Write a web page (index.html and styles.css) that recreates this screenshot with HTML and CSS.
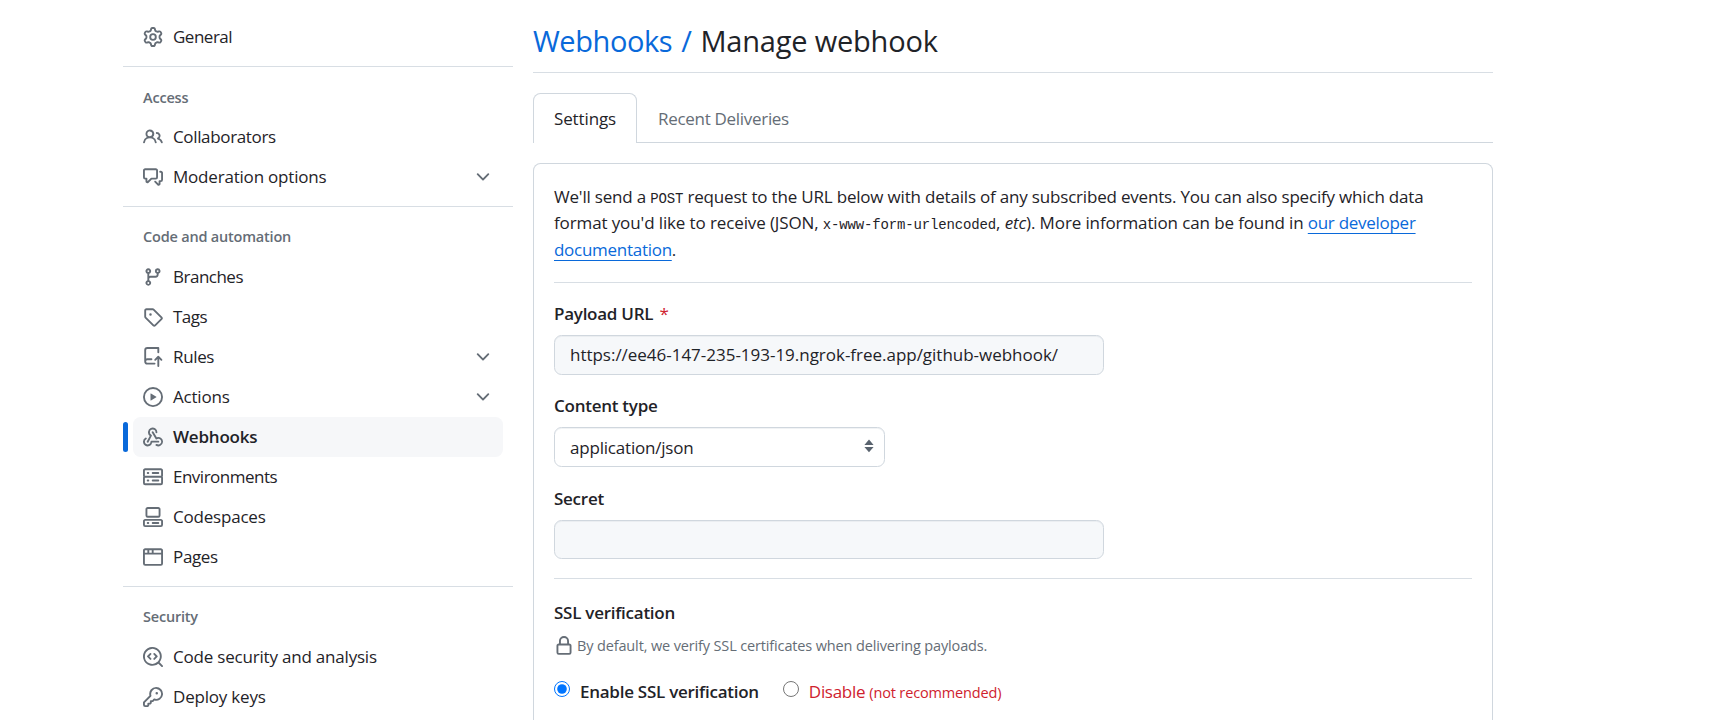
FILE: index.html
```
<!DOCTYPE html>
<html lang="en">
<head>
<meta charset="utf-8">
<title>Manage webhook</title>
<link rel="stylesheet" href="styles.css">
</head>
<body>
<svg class="defs" aria-hidden="true"><symbol id="chevron" viewBox="0 0 16 16"><path d="M12.78 5.22a.749.749 0 0 1 0 1.06l-4.25 4.25a.749.749 0 0 1-1.06 0L3.22 6.28a.749.749 0 1 1 1.06-1.06L8 8.939l3.72-3.719a.749.749 0 0 1 1.06 0Z"/></symbol></svg>
<div class="layout">
  <nav class="sidebar">
    <ul class="group">
      <li class="item"><svg class="icon" viewBox="0 0 16 16"><path d="M8 0a8.2 8.2 0 0 1 .701.031C9.444.095 9.99.645 10.16 1.29l.288 1.107c.018.066.079.158.212.224.231.114.454.243.668.386.123.082.233.09.299.071l1.103-.303c.644-.176 1.392.021 1.82.63.27.385.506.792.704 1.218.315.675.111 1.422-.364 1.891l-.814.806c-.049.048-.098.147-.088.294.016.257.016.515 0 .772-.01.147.038.246.088.294l.814.806c.475.469.679 1.216.364 1.891a7.977 7.977 0 0 1-.704 1.217c-.428.61-1.176.807-1.82.63l-1.102-.302c-.067-.019-.177-.011-.3.071a5.909 5.909 0 0 1-.668.386c-.133.066-.194.158-.211.224l-.29 1.106c-.168.646-.715 1.196-1.458 1.26a8.006 8.006 0 0 1-1.402 0c-.743-.064-1.289-.614-1.458-1.26l-.289-1.106c-.018-.066-.079-.158-.212-.224a5.738 5.738 0 0 1-.668-.386c-.123-.082-.233-.09-.299-.071l-1.103.303c-.644.176-1.392-.021-1.82-.63a8.12 8.12 0 0 1-.704-1.218c-.315-.675-.111-1.422.363-1.891l.815-.806c.05-.048.098-.147.088-.294a6.214 6.214 0 0 1 0-.772c.01-.147-.038-.246-.088-.294l-.815-.806C.635 6.045.431 5.298.746 4.623a7.92 7.92 0 0 1 .704-1.217c.428-.61 1.176-.807 1.82-.63l1.102.302c.067.019.177.011.3-.071.214-.143.437-.272.668-.386.133-.066.194-.158.211-.224l.29-1.106C6.009.645 6.556.095 7.299.03 7.53.01 7.764 0 8 0Zm-.571 1.525c-.036.003-.108.036-.137.146l-.289 1.105c-.147.561-.549.967-.998 1.189-.173.086-.34.183-.5.29-.417.278-.97.423-1.529.27l-1.103-.303c-.109-.03-.175.016-.195.045-.22.312-.412.644-.573.99-.014.031-.021.11.059.19l.815.806c.411.406.562.957.53 1.456a4.709 4.709 0 0 0 0 .582c.032.499-.119 1.05-.53 1.456l-.815.806c-.081.08-.073.159-.059.19.162.346.353.677.573.989.02.03.085.076.195.046l1.102-.303c.56-.153 1.113-.008 1.53.27.161.107.328.204.501.29.447.222.85.629.997 1.189l.289 1.105c.029.109.101.143.137.146a6.6 6.6 0 0 0 1.142 0c.036-.003.108-.036.137-.146l.289-1.105c.147-.561.549-.967.998-1.189.173-.086.34-.183.5-.29.417-.278.97-.423 1.529-.27l1.103.303c.109.029.175-.016.195-.045.22-.313.411-.644.573-.99.014-.031.021-.11-.059-.19l-.815-.806c-.411-.406-.562-.957-.53-1.456a4.709 4.709 0 0 0 0-.582c-.032-.499.119-1.05.53-1.456l.815-.806c.081-.08.073-.159.059-.19a6.464 6.464 0 0 0-.573-.989c-.02-.03-.085-.076-.195-.046l-1.102.303c-.56.153-1.113.008-1.53-.27a4.44 4.44 0 0 0-.501-.29c-.447-.222-.85-.629-.997-1.189l-.289-1.105c-.029-.11-.101-.143-.137-.146a6.6 6.6 0 0 0-1.142 0ZM11 8a3 3 0 1 1-6 0 3 3 0 0 1 6 0ZM9.5 8a1.5 1.5 0 1 0-3.001.001A1.5 1.5 0 0 0 9.5 8Z"/></svg><span class="label tighter lower">General</span></li>
    </ul>
    <div class="divider"></div>
    <h3 class="group-title lower">Access</h3>
    <ul class="group">
      <li class="item"><svg class="icon" viewBox="0 0 16 16"><path d="M2 5.5a3.5 3.5 0 1 1 5.898 2.549 5.508 5.508 0 0 1 3.034 4.084.75.75 0 1 1-1.482.235 4 4 0 0 0-7.9 0 .75.75 0 0 1-1.482-.236A5.507 5.507 0 0 1 3.102 8.05 3.493 3.493 0 0 1 2 5.5ZM11 4a3.001 3.001 0 0 1 2.22 5.018 5.01 5.01 0 0 1 2.56 3.012.749.749 0 0 1-.885.954.752.752 0 0 1-.549-.514 3.507 3.507 0 0 0-2.522-2.372.75.75 0 0 1-.574-.73v-.352a.75.75 0 0 1 .416-.672A1.5 1.5 0 0 0 11 5.5.75.75 0 0 1 11 4Zm-5.5-.5a2 2 0 1 0-.001 3.999A2 2 0 0 0 5.5 3.5Z"/></svg><span class="label tight">Collaborators</span></li>
      <li class="item"><svg class="icon" viewBox="0 0 16 16"><path d="M1.75 1h8.5c.966 0 1.75.784 1.75 1.75v5.5A1.75 1.75 0 0 1 10.25 10H7.061l-2.574 2.573A1.458 1.458 0 0 1 2 11.543V10h-.25A1.75 1.75 0 0 1 0 8.25v-5.5C0 1.784.784 1 1.75 1ZM1.5 2.75v5.5c0 .138.112.25.25.25h1a.75.75 0 0 1 .75.75v2.19l2.72-2.72a.749.749 0 0 1 .53-.22h3.5a.25.25 0 0 0 .25-.25v-5.5a.25.25 0 0 0-.25-.25h-8.5a.25.25 0 0 0-.25.25Zm13 2a.25.25 0 0 0-.25-.25h-.5a.75.75 0 0 1 0-1.5h.5c.966 0 1.75.784 1.75 1.75v5.5A1.75 1.75 0 0 1 14.25 12H14v1.543a1.458 1.458 0 0 1-2.487 1.03L9.22 12.28a.749.749 0 0 1 .326-1.275.749.749 0 0 1 .734.215l2.22 2.22v-2.19a.75.75 0 0 1 .75-.75h1a.25.25 0 0 0 .25-.25Z"/></svg><span class="label">Moderation options</span><svg class="icon"><use href="#chevron"/></svg></li>
    </ul>
    <div class="divider"></div>
    <h3 class="group-title">Code and automation</h3>
    <ul class="group">
      <li class="item"><svg class="icon" viewBox="0 0 16 16"><path d="M9.5 3.25a2.25 2.25 0 1 1 3 2.122V6A2.5 2.5 0 0 1 10 8.5H6a1 1 0 0 0-1 1v1.128a2.251 2.251 0 1 1-1.5 0V5.372a2.25 2.25 0 1 1 1.5 0v1.836A2.493 2.493 0 0 1 6 7h4a1 1 0 0 0 1-1v-.628A2.25 2.25 0 0 1 9.5 3.25Zm-6 0a.75.75 0 1 0 1.5 0 .75.75 0 0 0-1.5 0Zm8.25-.75a.75.75 0 1 0 0 1.5.75.75 0 0 0 0-1.5ZM4.25 12a.75.75 0 1 0 0 1.5.75.75 0 0 0 0-1.5Z"/></svg><span class="label tighter">Branches</span></li>
      <li class="item"><svg class="icon" viewBox="0 0 16 16"><path d="M1 7.775V2.75C1 1.784 1.784 1 2.75 1h5.025c.464 0 .91.184 1.238.513l6.25 6.25a1.75 1.75 0 0 1 0 2.474l-5.026 5.026a1.75 1.75 0 0 1-2.474 0l-6.25-6.25A1.752 1.752 0 0 1 1 7.775Zm1.5 0c0 .066.026.13.073.177l6.25 6.25a.25.25 0 0 0 .354 0l5.025-5.025a.25.25 0 0 0 0-.354l-6.25-6.25a.25.25 0 0 0-.177-.073H2.75a.25.25 0 0 0-.25.25ZM6 5a1 1 0 1 1 0 2 1 1 0 0 1 0-2Z"/></svg><span class="label tighter">Tags</span></li>
      <li class="item"><svg class="icon" viewBox="0 0 16 16"><path d="M1 2.5A2.5 2.5 0 0 1 3.5 0h8.75a.75.75 0 0 1 .75.75v3.5a.75.75 0 0 1-1.5 0V1.5h-8a1 1 0 0 0-1 1v6.708A2.493 2.493 0 0 1 3.5 9h3.25a.75.75 0 0 1 0 1.5H3.5a1 1 0 0 0 0 2h5.75a.75.75 0 0 1 0 1.5H3.5A2.5 2.5 0 0 1 1 11.5ZM12.78 7.22l2.5 2.5a.75.75 0 0 1-1.06 1.06L13 9.56v5.69a.75.75 0 0 1-1.5 0V9.56l-1.22 1.22a.75.75 0 0 1-1.06-1.06l2.5-2.5a.75.75 0 0 1 1.06 0Z"/></svg><span class="label tight">Rules</span><svg class="icon"><use href="#chevron"/></svg></li>
      <li class="item"><svg class="icon" viewBox="0 0 16 16"><path d="M8 0a8 8 0 1 1 0 16A8 8 0 0 1 8 0ZM1.5 8a6.5 6.5 0 1 0 13 0 6.5 6.5 0 0 0-13 0Zm4.879-2.773 4.264 2.559a.25.25 0 0 1 0 .428l-4.264 2.559A.25.25 0 0 1 6 10.559V5.442a.25.25 0 0 1 .379-.215Z"/></svg><span class="label">Actions</span><svg class="icon"><use href="#chevron"/></svg></li>
      <li class="item current"><svg class="icon" viewBox="0 0 16 16"><path d="M5.5 4.25a2.25 2.25 0 0 1 4.5 0 .75.75 0 0 0 1.5 0 3.75 3.75 0 1 0-6.14 2.889l-2.272 4.258a.75.75 0 0 0 1.324.706L7 7.25a.75.75 0 0 0-.309-1.015A2.25 2.25 0 0 1 5.5 4.25Z"/><path d="M7.364 3.607a.75.75 0 0 1 1.03.257l2.608 4.349a3.75 3.75 0 1 1-.628 6.785.75.75 0 0 1 .752-1.299 2.25 2.25 0 1 0-.033-3.88.75.75 0 0 1-1.03-.256L7.107 4.636a.75.75 0 0 1 .257-1.03Z"/><path d="M2.9 8.776A.75.75 0 0 1 2.625 9.8 2.25 2.25 0 1 0 6 11.75a.75.75 0 0 1 .75-.751h5.5a.75.75 0 0 1 0 1.5H7.425a3.751 3.751 0 1 1-5.55-3.998.75.75 0 0 1 1.024.274Z"/></svg><span class="label">Webhooks</span></li>
      <li class="item"><svg class="icon" viewBox="0 0 16 16"><path d="M1.75 1h12.5c.966 0 1.75.784 1.75 1.75v4c0 .372-.116.717-.314 1 .198.283.314.628.314 1v4a1.75 1.75 0 0 1-1.75 1.75H1.75A1.75 1.75 0 0 1 0 12.75v-4c0-.358.109-.707.314-1a1.739 1.739 0 0 1-.314-1v-4C0 1.784.784 1 1.75 1ZM1.5 2.75v4c0 .138.112.25.25.25h12.5a.25.25 0 0 0 .25-.25v-4a.25.25 0 0 0-.25-.25H1.75a.25.25 0 0 0-.25.25Zm.25 5.75a.25.25 0 0 0-.25.25v4c0 .138.112.25.25.25h12.5a.25.25 0 0 0 .25-.25v-4a.25.25 0 0 0-.25-.25ZM7 4.75A.75.75 0 0 1 7.75 4h4.5a.75.75 0 0 1 0 1.5h-4.5A.75.75 0 0 1 7 4.75ZM7.75 10h4.5a.75.75 0 0 1 0 1.5h-4.5a.75.75 0 0 1 0-1.5ZM3 4.75A.75.75 0 0 1 3.75 4h.5a.75.75 0 0 1 0 1.5h-.5A.75.75 0 0 1 3 4.75ZM3.75 10h.5a.75.75 0 0 1 0 1.5h-.5a.75.75 0 0 1 0-1.5Z"/></svg><span class="label tighter">Environments</span></li>
      <li class="item"><svg class="icon" viewBox="0 0 16 16"><path d="M0 11.25c0-.966.784-1.75 1.75-1.75h12.5c.966 0 1.75.784 1.75 1.75v3A1.75 1.75 0 0 1 14.25 16H1.75A1.75 1.75 0 0 1 0 14.25Zm2-9.5C2 .784 2.784 0 3.75 0h8.5C13.216 0 14 .784 14 1.75v5a1.75 1.75 0 0 1-1.75 1.75h-8.5A1.75 1.75 0 0 1 2 6.75Zm1.75-.25a.25.25 0 0 0-.25.25v5c0 .138.112.25.25.25h8.5a.25.25 0 0 0 .25-.25v-5a.25.25 0 0 0-.25-.25Zm-2 9.5a.25.25 0 0 0-.25.25v3c0 .138.112.25.25.25h12.5a.25.25 0 0 0 .25-.25v-3a.25.25 0 0 0-.25-.25Z"/><path d="M7 12.75a.75.75 0 0 1 .75-.75h4.5a.75.75 0 0 1 0 1.5h-4.5a.75.75 0 0 1-.75-.75Zm-4 0a.75.75 0 0 1 .75-.75h.5a.75.75 0 0 1 0 1.5h-.5a.75.75 0 0 1-.75-.75Z"/></svg><span class="label">Codespaces</span></li>
      <li class="item"><svg class="icon" viewBox="0 0 16 16"><path d="M0 2.75C0 1.784.784 1 1.75 1h12.5c.966 0 1.75.784 1.75 1.75v10.5A1.75 1.75 0 0 1 14.25 15H1.75A1.75 1.75 0 0 1 0 13.25ZM14.5 6h-13v7.25c0 .138.112.25.25.25h12.5a.25.25 0 0 0 .25-.25Zm-6-3.5v2h6V2.75a.25.25 0 0 0-.25-.25ZM5 2.5v2h2v-2Zm-3.25 0a.25.25 0 0 0-.25.25V4.5h2v-2Z"/></svg><span class="label tight">Pages</span></li>
    </ul>
    <div class="divider"></div>
    <h3 class="group-title">Security</h3>
    <ul class="group">
      <li class="item"><svg class="icon" viewBox="0 0 16 16"><path d="M8.47 4.97a.75.75 0 0 0 0 1.06L9.94 7.5 8.47 8.97a.75.75 0 1 0 1.06 1.06l2-2a.75.75 0 0 0 0-1.06l-2-2a.75.75 0 0 0-1.06 0ZM6.53 6.03a.75.75 0 0 0-1.06-1.06l-2 2a.75.75 0 0 0 0 1.06l2 2a.75.75 0 1 0 1.06-1.06L5.06 7.5l1.47-1.47Z"/><path d="M12.246 13.307a7.501 7.501 0 1 1 1.06-1.06l2.474 2.473a.749.749 0 1 1-1.06 1.06ZM1.5 7.5a6.002 6.002 0 0 0 3.608 5.504 6.002 6.002 0 0 0 6.486-1.117.748.748 0 0 1 .292-.293A6 6 0 1 0 1.5 7.5Z"/></svg><span class="label">Code security and analysis</span></li>
      <li class="item"><svg class="icon" viewBox="0 0 16 16"><path d="M10.5 0a5.499 5.499 0 1 1-1.288 10.848l-.932.932a.749.749 0 0 1-.53.22H7v.75a.749.749 0 0 1-.22.53l-.5.5a.749.749 0 0 1-.53.22H5v.75a.749.749 0 0 1-.22.53l-.5.5a.749.749 0 0 1-.53.22h-2A1.75 1.75 0 0 1 0 14.25v-2c0-.199.079-.389.22-.53l4.932-4.932A5.5 5.5 0 0 1 10.5 0Zm-4 5.5c-.001.431.069.86.205 1.269a.75.75 0 0 1-.181.768L1.5 12.56v1.69c0 .138.112.25.25.25h1.69l.06-.06v-1.19a.75.75 0 0 1 .75-.75h1.19l.06-.06v-1.19a.75.75 0 0 1 .75-.75h1.19l1.023-1.025a.75.75 0 0 1 .768-.18A4 4 0 1 0 6.5 5.5ZM11 6a1 1 0 1 1 0-2 1 1 0 0 1 0 2Z"/></svg><span class="label">Deploy keys</span></li>
    </ul>
  </nav>

  <main class="content">
    <h2 class="title"><a class="crumb" href="#">Webhooks<span class="slash">/</span></a>Manage webhook</h2>
    <div class="tabs">
      <a class="tab selected">Settings</a>
      <a class="tab">Recent Deliveries</a>
    </div>
    <section class="panel">
      <p class="intro">We'll send a <code>POST</code> request to the URL below with details of any subscribed events. You can also specify which data <span class="loose">format you'd like to receive (JSON, <code>x-www-form-urlencoded</code>, <em>etc</em>). More information can be found in</span> <a class="link" href="#">our developer documentation</a>.</p>
      <hr class="rule">
      <div class="field">
        <label class="field-label" for="url">Payload URL <span class="required">*</span></label>
        <input class="input" id="url" type="text" value="https://ee46-147-235-193-19.ngrok-free.app/github-webhook/">
      </div>
      <div class="field">
        <label class="field-label">Content type</label>
        <div class="select"><span>application/json</span><svg class="arrows" viewBox="0 0 10 14"><path d="M5 0.5 9.6 6H.4ZM.4 8h9.2L5 13.3Z"/></svg></div>
      </div>
      <div class="field last">
        <label class="field-label" for="secret">Secret</label>
        <input class="input secret" id="secret" type="text">
      </div>
      <hr class="rule">
      <h4 class="field-label ssl">SSL verification</h4>
      <p class="note"><svg class="icon lock" viewBox="0 0 16 16"><path d="M4 4a4 4 0 0 1 8 0v2h.25c.966 0 1.75.784 1.75 1.75v5.5A1.75 1.75 0 0 1 12.25 15h-8.5A1.75 1.75 0 0 1 2 13.25v-5.5C2 6.784 2.784 6 3.75 6H4Zm8.25 3.5h-8.5a.25.25 0 0 0-.25.25v5.5c0 .138.112.25.25.25h8.5a.25.25 0 0 0 .25-.25v-5.5a.25.25 0 0 0-.25-.25ZM10.5 6V4a2.5 2.5 0 1 0-5 0v2Z"/></svg><span>By default, we verify SSL certificates when delivering payloads.</span></p>
      <div class="choices">
        <label class="choice strong"><input class="radio" type="radio" name="ssl" checked><span>Enable SSL verification</span></label>
        <label class="choice danger"><input class="radio" type="radio" name="ssl"><span>Disable <small>(not recommended)</small></span></label>
      </div>
    </section>
  </main>
</div>
</body>
</html>
```
FILE: styles.css
```
* { box-sizing: border-box; }

body {
  margin: 0;
  height: 720px;
  overflow: hidden;
  background: #fff;
  color: #1f2328;
  font-family: "Open Sans", "Noto Sans", sans-serif;
  font-size: 17px;
  line-height: 26.25px;
  letter-spacing: -0.2px;
}

.defs { display: none; }

.layout {
  display: grid;
  grid-template-columns: 390px 960px;
  column-gap: 20px;
  padding-left: 123px;
}

.icon {
  flex: none;
  width: 20px;
  height: 20px;
  fill: #656d76;
}

/* Sidebar */
.sidebar { padding-top: 17px; }

.group {
  margin: 0;
  padding: 0 10px;
  list-style: none;
}

.item {
  position: relative;
  display: flex;
  align-items: center;
  gap: 10px;
  height: 40px;
  padding: 0 10px;
  border-radius: 7.5px;
}

.label { flex: 1; }
.label.lower { padding-top: 1px; }
.tight { letter-spacing: -0.35px; }
.tighter { letter-spacing: -0.5px; }

.current {
  background: #f6f7f9;
  font-weight: 600;
}

.current::before {
  content: "";
  position: absolute;
  left: -10px;
  top: 5px;
  width: 5px;
  height: 30px;
  border-radius: 7.5px;
  background: #0969da;
}

.divider {
  height: 1px;
  margin: 9px 0 10px;
  background: #d8dee4;
}

.group-title {
  height: 40px;
  margin: 0;
  padding: 0 20px;
  font-size: 14.5px;
  font-weight: 600;
  line-height: 40px;
  color: #656d76;
}

.group-title.lower { padding-top: 1px; }

/* Header */
.title {
  height: 73px;
  margin: 0 0 20px;
  padding-top: 21px;
  border-bottom: 1px solid #d8dee4;
  font-size: 29px;
  font-weight: 400;
  line-height: 40px;
  letter-spacing: -0.2px;
}

.crumb {
  color: #0969da;
  letter-spacing: -0.42px;
  text-decoration: none;
}

.slash { margin: 0 9px 0 9px; }

.tabs {
  display: flex;
  height: 50px;
  margin-bottom: 20px;
  border-bottom: 1px solid #d0d7de;
}

.tab {
  height: 50px;
  padding: 12px 20px 0;
  border: 1px solid transparent;
  border-bottom: 0;
  color: #656d76;
  letter-spacing: -0.3px;
}

.selected {
  width: 104px;
  border-color: #d0d7de;
  border-radius: 7.5px 7.5px 0 0;
  background: #fff;
  color: #1f2328;
  letter-spacing: -0.13px;
}

/* Form */
.panel {
  height: 557px;
  padding: 20px;
  border: 1px solid #d0d7de;
  border-bottom: 0;
  border-radius: 7.5px 7.5px 0 0;
}

.intro {
  margin: 0;
  letter-spacing: -0.19px;
}

.loose { letter-spacing: -0.12px; }

.intro code {
  font-family: "Liberation Mono", monospace;
  font-size: 14px;
  line-height: 1;
  letter-spacing: -0.15px;
}

.link {
  color: #0969da;
  letter-spacing: -0.28px;
  text-decoration: underline 1px;
  text-underline-offset: 4px;
  text-decoration-skip-ink: none;
}

.rule {
  height: 1px;
  margin: 19px 0 18px;
  border: 0;
  background: #d8dee4;
}

.field { margin-bottom: 18px; }
.last { padding-top: 1px; }

.field-label {
  display: block;
  margin: 0 0 8px;
  font-size: 17px;
  font-weight: 600;
  line-height: 26px;
  letter-spacing: -0.26px;
}

.required {
  margin-left: 2px;
  color: #cf222e;
  font-weight: 400;
}

.input {
  display: block;
  width: 550px;
  height: 40px;
  padding: 0 15px;
  border: 1px solid #d0d7de;
  border-radius: 7.5px;
  background: #f6f8fa;
  box-shadow: inset 0 1px 0 rgba(208, 215, 222, 0.3);
  color: #1f2328;
  font: inherit;
  letter-spacing: -0.02px;
}

.secret { height: 39px; }

.select {
  display: flex;
  align-items: center;
  justify-content: space-between;
  width: 331px;
  height: 40px;
  padding: 2px 10px 0 15px;
  border: 1px solid #d0d7de;
  border-radius: 7.5px;
  box-shadow: inset 0 1px 0 rgba(208, 215, 222, 0.3);
}

.arrows {
  width: 10px;
  height: 14px;
  margin-bottom: 4px;
  fill: #59636e;
}

.ssl { margin: 21px 0 9px; }

.note {
  display: flex;
  gap: 3px;
  margin: 0 0 22px;
  color: #656d76;
  font-size: 14.5px;
  line-height: 22px;
  letter-spacing: -0.14px;
}

.lock { margin-top: 1px; }

.choices {
  display: flex;
  gap: 24px;
}

.choice {
  display: flex;
  gap: 10px;
}

.strong {
  font-weight: 600;
  letter-spacing: -0.26px;
}

.danger {
  color: #cf222e;
  letter-spacing: -0.3px;
}

.danger small {
  font-size: 14.5px;
  letter-spacing: -0.15px;
}

.radio {
  width: 16px;
  height: 16px;
  margin: 2px 0 0;
}
```
